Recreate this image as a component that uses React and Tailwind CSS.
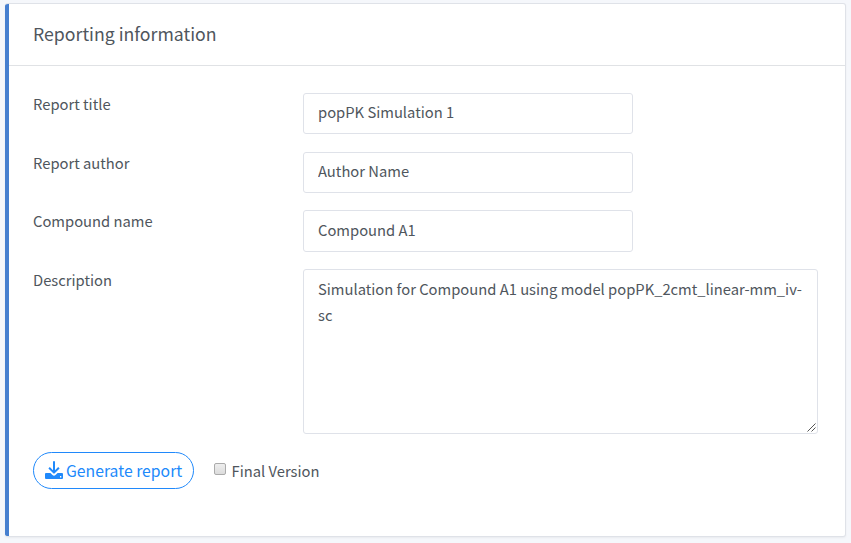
import { useState } from "react";

const fields = [
  { id: "title", label: "Report title", value: "popPK Simulation 1", row: "h-[59px]", box: "h-[41px]" },
  { id: "author", label: "Report author", value: "Author Name", row: "h-[58px]", box: "h-[41px]" },
  { id: "compound", label: "Compound name", value: "Compound A1", row: "h-[59px]", box: "h-[42px]" },
];

function DownloadIcon() {
  return (
    <svg width="18" height="18" viewBox="0 0 18 18" fill="none" className="-mt-px shrink-0">
      <path
        fill="currentColor"
        fillRule="evenodd"
        d="M1 11.9h4.4l2.1 2.2a2.1 2.1 0 0 0 3 0l2.1-2.2H17a1 1 0 0 1 1 1V17a1 1 0 0 1-1 1H1a1 1 0 0 1-1-1v-4.1a1 1 0 0 1 1-1Zm14 3.2v1.3h1.3v-1.3Z"
      />
      <path d="M9 .3v11M4.1 6.7 9 11.6l4.9-4.9" stroke="currentColor" strokeWidth="2" strokeLinejoin="round" />
    </svg>
  );
}

export default function App() {
  const [description, setDescription] = useState(
    "Simulation for Compound A1 using model popPK_2cmt_linear-mm_iv-sc"
  );
  return (
    <div className="h-[543px] w-[851px] overflow-hidden bg-[#f5f7fb] pt-[3px] pl-[5px] font-['Noto_Sans_CJK_SC',sans-serif] text-[14.76px] text-[#4f565d]">
      <section className="flex h-[534px] w-[841px] overflow-hidden rounded-[3px] border border-l-0 border-[#dfe2e8] bg-white shadow-[0_1px_2px_rgba(0,0,0,0.05)]">
        <div className="w-1 shrink-0 bg-[#467fcf]" />
        <div className="min-w-0 flex-1">
          <header className="flex h-[62px] items-center border-b border-[#e0e2e5] pb-[3px] pl-6">
            <h3 className="text-[17.7px] leading-6">Reporting information</h3>
          </header>
          <form className="pt-[27px] pl-6">
            {fields.map((f) => (
              <div key={f.id} className={`flex ${f.row}`}>
                <label htmlFor={f.id} className="w-[270px] leading-[22px]">{f.label}</label>
                <input
                  id={f.id}
                  defaultValue={f.value}
                  className={`w-[330px] rounded-[3px] border border-[#dfe2e9] px-[14px] pb-[4px] outline-none ${f.box}`}
                />
              </div>
            ))}
            <div className="flex h-[183px]">
              <label htmlFor="description" className="w-[270px] leading-[22px]">Description</label>
              <div className="relative h-[165px] w-[515px]">
                <textarea
                  id="description"
                  value={description}
                  onChange={(e) => setDescription(e.target.value)}
                  className="h-[165px] w-[515px] resize-none rounded-[3px] border border-[#dfe2e9] px-[14px] pt-[6px] leading-[26px] outline-none"
                />
                <svg width="9" height="9" viewBox="0 0 9 9" className="absolute right-[2px] bottom-[2px]" stroke="#555" strokeWidth="1">
                  <path d="M.5 8.5l8-8M4.5 8.5l4-4" />
                </svg>
              </div>
            </div>
            <div className="flex">
              <button
                type="button"
                className="flex h-[37px] w-[161px] items-center gap-[3px] rounded-full border border-[#2089fb] pl-[11px] text-[15.75px] whitespace-nowrap text-[#2089fb]"
              >
                <DownloadIcon />
                <span>Generate report</span>
              </button>
              <label className="ml-5 flex h-[37px]">
                <input
                  type="checkbox"
                  className="mt-[11px] h-3 w-3 appearance-none rounded-[2px] border border-[#ababab] bg-linear-to-b from-[#eeeeee] to-[#dcdcdc] checked:bg-[#2089fb]"
                />
                <span className="ml-[5.5px] leading-[37px]">Final Version</span>
              </label>
            </div>
          </form>
        </div>
      </section>
    </div>
  );
}
